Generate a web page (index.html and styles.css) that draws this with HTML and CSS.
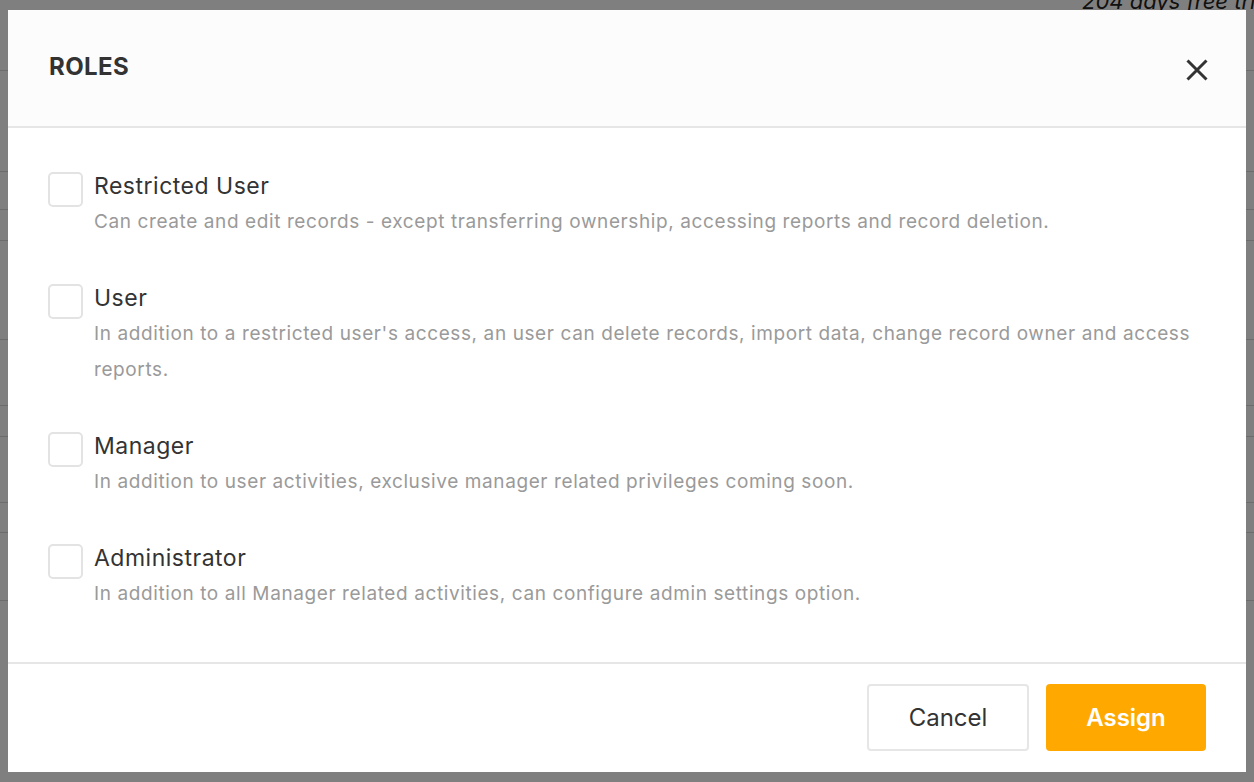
FILE: index.html
```html
<!DOCTYPE html>
<html>
<head>
<meta charset="utf-8">
<link rel="stylesheet" href="styles.css">
</head>
<body>
<div class="page">
  <div class="trial">204 days free trial</div>
  <div class="rows">
    <div class="row r1"></div>
    <div class="row r2"></div>
    <div class="row r3"></div>
    <div class="row r4"></div>
    <div class="row r5"></div>
    <div class="row r6"></div>
    <div class="row r7"></div>
    <div class="row r8"></div>
    <div class="row r9"></div>
    <div class="row r10"></div>
  </div>
</div>
<div class="overlay"></div>
<div class="modal">
  <div class="modal-header">
    <h2 class="modal-title">ROLES</h2>
    <button class="close" aria-label="Close">
      <svg width="22" height="22" viewBox="0 0 22 22"><path d="M1.5 1.5 L20.5 20.5 M20.5 1.5 L1.5 20.5" stroke="#333" stroke-width="3" fill="none"/></svg>
    </button>
  </div>
  <div class="modal-body">
    <label class="role">
      <span class="box"></span>
      <span class="role-text">
        <span class="role-name">Restricted User</span>
        <span class="role-desc">Can create and edit records - except transferring ownership, accessing reports and record deletion.</span>
      </span>
    </label>
    <label class="role">
      <span class="box"></span>
      <span class="role-text">
        <span class="role-name">User</span>
        <span class="role-desc">In addition to a restricted user's access, an user can delete records, import data, change record owner and access reports.</span>
      </span>
    </label>
    <label class="role">
      <span class="box"></span>
      <span class="role-text">
        <span class="role-name">Manager</span>
        <span class="role-desc">In addition to user activities, exclusive manager related privileges coming soon.</span>
      </span>
    </label>
    <label class="role">
      <span class="box"></span>
      <span class="role-text">
        <span class="role-name">Administrator</span>
        <span class="role-desc">In addition to all Manager related activities, can configure admin settings option.</span>
      </span>
    </label>
  </div>
  <div class="modal-footer">
    <button class="btn btn-cancel">Cancel</button>
    <button class="btn btn-assign">Assign</button>
  </div>
</div>
</body>
</html>
```
FILE: styles.css
```css
html, body {
  margin: 0;
  padding: 0;
  height: 100%;
}
body {
  font-family: "Inter", "Open Sans", sans-serif;
  background: #ffffff;
  overflow: hidden;
}
.page {
  position: relative;
  height: 782px;
}
.trial {
  position: absolute;
  top: -12px;
  left: 1082px;
  font-size: 22px;
  font-style: italic;
  color: #222;
  white-space: nowrap;
}
.rows {
  display: flex;
  flex-direction: column;
}
.row { border-bottom: 1px solid #d8d8d8; }
.r1 { height: 70px; }
.r2 { height: 100px; }
.r3 { height: 37px; }
.r4 { height: 30px; }
.r5 { height: 98px; }
.r6 { height: 65px; }
.r7 { height: 30px; }
.r8 { height: 65px; }
.r9 { height: 29px; }
.r10 { height: 67px; }
.overlay {
  position: fixed;
  inset: 0;
  background: rgba(0, 0, 0, 0.5);
}
.modal {
  position: fixed;
  left: 8px;
  top: 10px;
  width: 1238px;
  height: 762px;
  background: #fff;
  display: flex;
  flex-direction: column;
}
.modal-header {
  height: 116px;
  background: #fcfcfc;
  border-bottom: 2px solid #e6e6e6;
  display: flex;
  align-items: center;
  justify-content: space-between;
  padding: 0 38px 0 41px;
  flex-shrink: 0;
}
.modal-title {
  margin: 0;
  font-size: 24px;
  font-weight: 700;
  letter-spacing: 0.4px;
  color: #333;
  margin-top: -4px;
}
.close {
  border: none;
  background: none;
  padding: 0;
  width: 22px;
  height: 22px;
  margin-top: 4px;
  cursor: pointer;
}
.close svg { display: block; }
.modal-body {
  flex: 1;
  padding: 40px 40px 0 40px;
  display: flex;
  flex-direction: column;
  gap: 40px;
  border-bottom: 2px solid #e6e6e6;
}
.role {
  display: flex;
  gap: 11px;
  align-items: flex-start;
}
.box {
  flex-shrink: 0;
  width: 31px;
  height: 31px;
  border: 2px solid #e3e3e3;
  border-radius: 5px;
  margin-top: 4px;
  background: #fff;
}
.role-text {
  display: flex;
  flex-direction: column;
}
.role-name {
  font-size: 23px;
  letter-spacing: 0.5px;
  line-height: 36px;
  color: #333;
}
.role-desc {
  font-size: 19px;
  letter-spacing: 0.6px;
  line-height: 36px;
  color: #9a9a9a;
}
.modal-footer {
  height: 108px;
  box-sizing: border-box;
  padding: 20px 40px 21px 0;
  display: flex;
  justify-content: flex-end;
  gap: 17px;
  flex-shrink: 0;
}
.btn {
  font-family: inherit;
  font-size: 24px;
  height: 67px;
  border-radius: 4px;
  cursor: pointer;
}
.btn-cancel {
  width: 162px;
  background: #fff;
  border: 2px solid #e6e6e6;
  color: #333;
}
.btn-assign {
  width: 160px;
  background: #ffa800;
  border: none;
  color: #fff;
  font-weight: 600;
}
```
